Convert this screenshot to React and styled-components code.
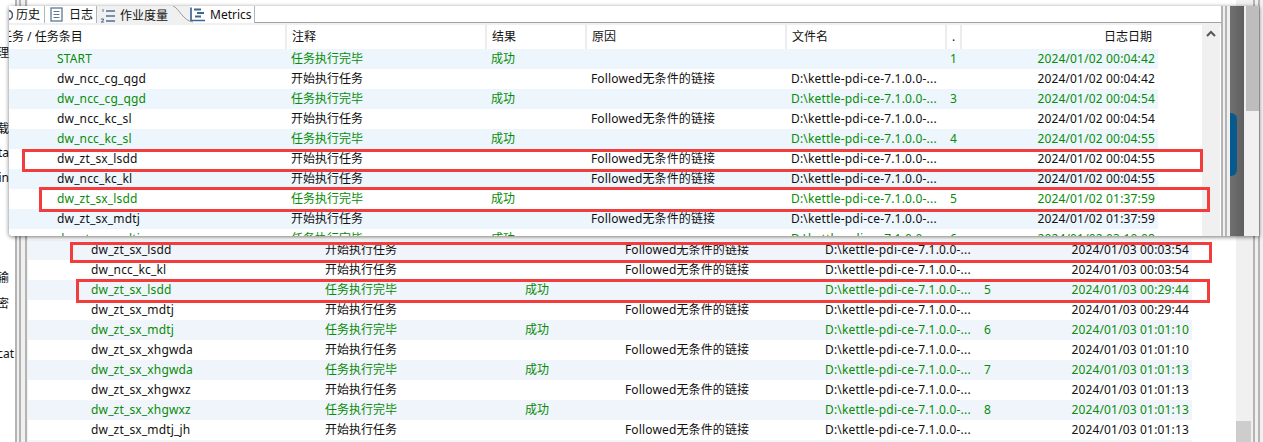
import React from 'react'
import styled, { createGlobalStyle } from 'styled-components'

const GlobalStyle = createGlobalStyle`
html, body {
  margin: 0;
  padding: 0;
  background: #fff;
}
* {
  box-sizing: border-box;
}
`

const Page = styled.div`
position: relative;
display: flex;
width: 1263px;
height: 442px;
overflow: hidden;
background: #fff;
color: #111;
font-family: "Noto Sans", "Noto Sans CJK SC", sans-serif;
font-size: 12px;
line-height: 20px;
`

const Sidebar = styled.div`
width: 15px;
flex-shrink: 0;
padding-top: 43px;
`

const SideLabel = styled.div`
display: flex;
justify-content: flex-end;
width: ${props => props.$width || 9}px;
margin-top: ${props => props.$gap}px;
white-space: nowrap;
`

const Rails = styled.div`
width: ${props => props.$width}px;
flex-shrink: 0;
background: #f0f0f0;
border-left: 2px solid #b4b4b4;
display: flex;
`

const Rail = styled.div`
width: ${props => props.$width}px;
margin-left: ${props => props.$gap}px;
border-left: 2px solid #b4b4b4;
`

const BackPanel = styled.div`
flex: 1;
display: flex;
justify-content: space-between;
`

const BackBody = styled.div`
padding-top: 240px;
`

const BackScroll = styled.div`
width: 17px;
height: 442px;
display: flex;
align-items: flex-end;
background: #f0f0f0;
`

const BackThumb = styled.div`
width: 15px;
height: 21px;
background: #cdcdcd;
`

const Table = styled.div`
width: ${props => props.$width}px;
`

const HeaderRow = styled.div`
display: grid;
grid-template-columns: 276px 200px 100px 200px 160px 15px 198px;
height: 24px;
background: #fff;
`

const HeaderCell = styled.div`
padding: 2px ${props => props.$right ? 6 : 0}px 0 ${props => props.$flush ? 0 : 5}px;
text-align: ${props => props.$right ? 'right' : 'left'};
border-left: ${props => props.$flush ? 'none' : '2px solid #ececec'};
overflow: hidden;
white-space: nowrap;
`

const ClippedTitle = styled.div`
margin-left: -9px;
`

const Row = styled.div`
display: grid;
grid-template-columns: ${props => props.$first}px 200px 100px 200px 160px 15px 198px;
height: 20px;
background: ${props => props.$striped ? props.$stripe : '#fff'};
color: ${props => props.$done ? '#078c07' : '#111'};
`

const Cell = styled.div`
padding-left: 6px;
white-space: nowrap;
letter-spacing: ${props => props.$spacing || 0}px;
`

const NameCell = styled(Cell)`
padding-left: ${props => props.$indent}px;
letter-spacing: 0.16px;
`

const NumCell = styled(Cell)`
padding-left: 5px;
overflow: visible;
`

const DateCell = styled.div`
padding-right: 3px;
text-align: right;
white-space: nowrap;
letter-spacing: 0.16px;
`

const FloatWindow = styled.div`
position: absolute;
left: 9px;
top: 6px;
width: 1250px;
height: 230px;
display: flex;
background: #fff;
border-bottom-left-radius: 4px;
box-shadow: 0 1px 4px rgba(0, 0, 0, 0.55);
overflow: hidden;
`

const FloatMain = styled.div`
width: 1212px;
flex-shrink: 0;
display: flex;
flex-direction: column;
`

const TabBar = styled.div`
display: flex;
height: 19px;
flex-shrink: 0;
background: #f0f0f0;
`

const Tab = styled.div`
display: flex;
align-items: center;
gap: ${props => props.$gap}px;
width: ${props => props.$width}px;
height: ${props => props.$active ? 19 : 17}px;
margin-left: ${props => props.$pull || 0}px;
padding-left: ${props => props.$pad}px;
background: ${props => props.$active ? '#f0f0f0' : '#fff'};
border-right: 1px solid ${props => props.$active ? 'transparent' : '#b5b5b5'};
white-space: nowrap;
overflow: hidden;
`

const TabCurve = styled.svg`
display: block;
width: 20px;
height: 19px;
flex-shrink: 0;
position: relative;
z-index: 1;
`

const TabSpace = styled.div`
flex: 1;
height: 17px;
background: #fff;
border-bottom: 1px solid #a3a3a3;
`

const FloatBody = styled.div`
flex: 1;
display: flex;
justify-content: space-between;
overflow: hidden;
min-height: 0;
`

const FloatScroll = styled.div`
width: 18px;
margin-right: 1px;
display: flex;
justify-content: center;
padding-top: 5px;
background: #f0f0f0;
`

const ChevronIcon = styled.svg`
display: block;
width: 10px;
height: 7px;
`

const DimBand = styled.div`
width: 14px;
flex-shrink: 0;
padding-top: 107px;
background: linear-gradient(to right, #707070, #5f5f5f);
`

const BlueTab = styled.div`
width: 7px;
height: 63px;
background: #075a8e;
border-radius: 0 6px 6px 0;
`

const DimScroll = styled.div`
flex: 1;
padding-left: 2px;
background: #f0f0f0;
`

const DimThumb = styled.div`
width: 13px;
height: 105px;
background: #bdbdbd;
`

const Mark = styled.div`
position: absolute;
left: ${props => props.$x}px;
top: ${props => props.$y}px;
width: ${props => props.$w}px;
height: ${props => props.$h}px;
border: 3px solid #f33c3c;
z-index: 5;
`

const FILE = 'D:\\kettle-pdi-ce-7.1.0.0-...'
const BEGIN = '开始执行任务'
const DONE = '任务执行完毕'
const FOLLOW = 'Followed无条件的链接'

const topRows = [
  { name: 'START', done: true, num: '1', date: '2024/01/02 00:04:42', noFile: true },
  { name: 'dw_ncc_cg_qgd', date: '2024/01/02 00:04:42' },
  { name: 'dw_ncc_cg_qgd', done: true, num: '3', date: '2024/01/02 00:04:54' },
  { name: 'dw_ncc_kc_sl', date: '2024/01/02 00:04:54' },
  { name: 'dw_ncc_kc_sl', done: true, num: '4', date: '2024/01/02 00:04:55' },
  { name: 'dw_zt_sx_lsdd', date: '2024/01/02 00:04:55' },
  { name: 'dw_ncc_kc_kl', date: '2024/01/02 00:04:55' },
  { name: 'dw_zt_sx_lsdd', done: true, num: '5', date: '2024/01/02 01:37:59' },
  { name: 'dw_zt_sx_mdtj', date: '2024/01/02 01:37:59' },
  { name: 'dw_zt_sx_mdtj', done: true, num: '6', date: '2024/01/02 03:10:08' },
]

const backRows = [
  { name: 'dw_zt_sx_lsdd', date: '2024/01/03 00:03:54' },
  { name: 'dw_ncc_kc_kl', date: '2024/01/03 00:03:54' },
  { name: 'dw_zt_sx_lsdd', done: true, num: '5', date: '2024/01/03 00:29:44' },
  { name: 'dw_zt_sx_mdtj', date: '2024/01/03 00:29:44' },
  { name: 'dw_zt_sx_mdtj', done: true, num: '6', date: '2024/01/03 01:01:10' },
  { name: 'dw_zt_sx_xhgwda', date: '2024/01/03 01:01:10' },
  { name: 'dw_zt_sx_xhgwda', done: true, num: '7', date: '2024/01/03 01:01:13' },
  { name: 'dw_zt_sx_xhgwxz', date: '2024/01/03 01:01:13' },
  { name: 'dw_zt_sx_xhgwxz', done: true, num: '8', date: '2024/01/03 01:01:13' },
  { name: 'dw_zt_sx_mdtj_jh', date: '2024/01/03 01:01:13' },
  { name: '', date: '' },
]

const headers = ['注释', '结果', '原因', '文件名']

const LogRow = ({ row, index, first, indent, stripe }) => (
  <Row $first={first} $striped={index % 2 === 0} $stripe={stripe} $done={row.done}>
    <NameCell $indent={indent}>{row.name}</NameCell>
    <Cell>{row.name ? (row.done ? DONE : BEGIN) : ''}</Cell>
    <Cell>{row.done ? '成功' : ''}</Cell>
    <Cell $spacing={0.14}>{row.name && !row.done ? FOLLOW : ''}</Cell>
    <Cell $spacing={0.18}>{row.name && !row.noFile ? FILE : ''}</Cell>
    <NumCell>{row.num}</NumCell>
    <DateCell>{row.date}</DateCell>
  </Row>
)

const HistoryIcon = () => (
  <svg width="4" height="14" viewBox="0 0 4 14" style={{ flexShrink: 0 }}>
    <circle cx="-1" cy="7" r="4.5" fill="none" stroke="#4a5a70" strokeWidth="1.6" />
  </svg>
)

const LogIcon = () => (
  <svg width="13" height="15" viewBox="0 0 13 15" style={{ flexShrink: 0 }}>
    <rect x="1" y="1" width="11" height="13" fill="#fff" stroke="#5b7896" strokeWidth="1.3" />
    <path d="M3.5 4.5h6M3.5 7.5h6M3.5 10.5h6" stroke="#5b7896" strokeWidth="1.1" />
  </svg>
)

const MetricsListIcon = () => (
  <svg width="16" height="16" viewBox="0 0 16 16" style={{ flexShrink: 0 }}>
    <path d="M3 1v3" stroke="#5b7896" strokeWidth="1" />
    <path d="M1 11h2.500v1.200l-2.200 1.800h2.500" fill="none" stroke="#3f6590" strokeWidth="1" />
    <path d="M6 3h9M6 8h9M6 13h9" stroke="#4e6f92" strokeWidth="1.4" />
  </svg>
)

const MetricsIcon = () => (
  <svg width="16" height="15" viewBox="0 0 16 15" style={{ flexShrink: 0 }}>
    <path d="M1 0.500v13h14" fill="none" stroke="#3f6590" strokeWidth="1.700" />
    <path d="M4 2.500h7M7 6h7M5 9.500h6" stroke="#3f6590" strokeWidth="2" />
  </svg>
)

const App = () => {
  return (
    <Page>
      <GlobalStyle />
      <Sidebar>
        <SideLabel $gap={0}>处理</SideLabel>
        <SideLabel $gap={56}>载</SideLabel>
        <SideLabel $gap={4}>data</SideLabel>
        <SideLabel $gap={5}>Join</SideLabel>
        <SideLabel $gap={80}>传输</SideLabel>
        <SideLabel $gap={6}>加密</SideLabel>
        <SideLabel $gap={30} $width={14}>concat</SideLabel>
      </Sidebar>
      <Rails $width={13}>
        <Rail $width={6} $gap={2} />
        <Rail $width={3} $gap={0} />
      </Rails>
      <BackPanel>
        <BackBody>
          <Table $width={1164}>
            {backRows.map((row, i) => (
              <LogRow key={i} row={row} index={i} first={291} indent={63} stripe="#f0f5fb" />
            ))}
          </Table>
        </BackBody>
        <BackScroll>
          <BackThumb />
        </BackScroll>
      </BackPanel>
      <Rails $width={10}>
        <Rail $width={4} $gap={3} />
      </Rails>

      <FloatWindow>
        <FloatMain>
          <TabBar>
            <Tab $width={36} $pad={0} $gap={3}>
              <HistoryIcon />
              <span>历史</span>
            </Tab>
            <Tab $width={52} $pad={5} $gap={6}>
              <LogIcon />
              <span>日志</span>
            </Tab>
            <Tab $active $width={76} $pad={3} $gap={4}>
              <MetricsListIcon />
              <span>作业度量</span>
            </Tab>
            <TabCurve viewBox="0 0 20 19">
              <path d="M0 0C6 2 10 15 20 16V19H0Z" fill="#f0f0f0" />
              <path d="M0 0C6 2 10 15 20 16" fill="none" stroke="#9a9a9a" />
            </TabCurve>
            <Tab $width={65} $pad={0} $gap={4} $pull={-3}>
              <MetricsIcon />
              <span>Metrics</span>
            </Tab>
            <TabSpace />
          </TabBar>
          <FloatBody>
            <Table $width={1149}>
              <HeaderRow>
                <HeaderCell $flush>
                  <ClippedTitle>任务 / 任务条目</ClippedTitle>
                </HeaderCell>
                {headers.map(h => (
                  <HeaderCell key={h}>{h}</HeaderCell>
                ))}
                <HeaderCell>.</HeaderCell>
                <HeaderCell $right>日志日期</HeaderCell>
              </HeaderRow>
              {topRows.map((row, i) => (
                <LogRow key={i} row={row} index={i} first={276} indent={48} stripe="#edf6fd" />
              ))}
            </Table>
            <FloatScroll>
              <ChevronIcon viewBox="0 0 10 7">
                <path d="M1 6l4-4 4 4" fill="none" stroke="#555" strokeWidth="2" />
              </ChevronIcon>
            </FloatScroll>
          </FloatBody>
        </FloatMain>
        <Rails $width={9}>
          <Rail $width={4} $gap={2} />
        </Rails>
        <DimBand>
          <BlueTab />
        </DimBand>
        <DimScroll>
          <DimThumb />
        </DimScroll>
      </FloatWindow>

      <Mark $x={22} $y={149} $w={1181} $h={23} />
      <Mark $x={39} $y={187} $w={1171} $h={25} />
      <Mark $x={70} $y={242} $w={1142} $h={21} />
      <Mark $x={76} $y={279} $w={1134} $h={24} />
    </Page>
  )
}

export default App
